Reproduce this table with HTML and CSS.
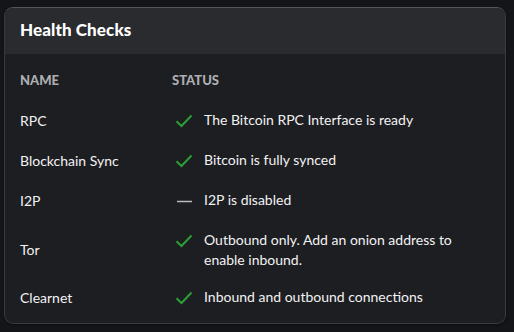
FILE: index.html
```html
<!DOCTYPE html>
<html>
<head>
<meta charset="utf-8">
<link rel="stylesheet" href="styles.css">
</head>
<body>
<section class="card">
  <header class="card-head">
    <h2 class="title">Health Checks</h2>
  </header>
  <div class="card-body">
    <table class="checks">
      <thead>
        <tr><th class="col-name">NAME</th><th class="col-status">STATUS</th></tr>
      </thead>
      <tbody>
        <tr>
          <td class="name">RPC</td>
          <td><div class="status"><svg class="icon ok" viewBox="0 0 18 24"><path d="M1.5 12.2 L6.5 17 L16.5 6.5"/></svg><span class="msg">The Bitcoin RPC Interface is ready</span></div></td>
        </tr>
        <tr>
          <td class="name">Blockchain Sync</td>
          <td><div class="status"><svg class="icon ok" viewBox="0 0 18 24"><path d="M1.5 12.2 L6.5 17 L16.5 6.5"/></svg><span class="msg">Bitcoin is fully synced</span></div></td>
        </tr>
        <tr>
          <td class="name">I2P</td>
          <td><div class="status"><svg class="icon dash" viewBox="0 0 18 24"><path d="M2 12.5 L17 12.5"/></svg><span class="msg">I2P is disabled</span></div></td>
        </tr>
        <tr>
          <td class="name">Tor</td>
          <td><div class="status"><svg class="icon ok" viewBox="0 0 18 24"><path d="M1.5 12.2 L6.5 17 L16.5 6.5"/></svg><span class="msg">Outbound only. Add an onion address to enable inbound.</span></div></td>
        </tr>
        <tr>
          <td class="name">Clearnet</td>
          <td><div class="status"><svg class="icon ok" viewBox="0 0 18 24"><path d="M1.5 12.2 L6.5 17 L16.5 6.5"/></svg><span class="msg">Inbound and outbound connections</span></div></td>
        </tr>
      </tbody>
    </table>
  </div>
</section>
</body>
</html>
```
FILE: styles.css
```css
html, body {
  margin: 0;
  padding: 0;
  background: #141518;
  font-family: "Lato", "Open Sans", sans-serif;
  color: #f2f2f4;
}
body {
  padding: 7px 8px 8px 4px;
}
.card {
  width: 502px;
  height: 317px;
  box-sizing: border-box;
  border-radius: 9px;
  border: 1px solid #3a3b40;
  border-top-color: #55565b;
  background: #1d1e21;
  overflow: hidden;
  box-shadow: 0 1px 2px rgba(0,0,0,0.5);
}
.card-head {
  height: 46px;
  box-sizing: border-box;
  background: #2a2b2f;
  display: flex;
  align-items: center;
  padding: 0 15px 3px;
}
.title {
  margin: 0;
  font-size: 17px;
  font-weight: 900;
  color: #ffffff;
  letter-spacing: 0.1px;
}
.card-body {
  padding: 18px 15px 0;
}
.checks {
  border-collapse: collapse;
  width: 100%;
  font-size: 14px;
}
.checks th {
  text-align: left;
  font-size: 13px;
  font-weight: 900;
  color: #adaeb3;
  padding: 0 0 13px;
  line-height: 16px;
}
.col-name { width: 152px; }
.checks td {
  padding: 8px 0;
  vertical-align: middle;
  line-height: 20px;
}
.name { color: #f2f2f4; }
.status {
  display: flex;
  align-items: flex-start;
  gap: 11px;
  width: 290px;
  color: #f2f2f4;
}
.msg {
  padding-top: 1px;
}
.icon {
  flex: none;
  width: 18px;
  height: 24px;
  margin-left: 3px;
  fill: none;
  stroke-width: 2;
  stroke-linecap: butt;
}
.icon.ok { stroke: #2c9e35; }
.icon.dash { stroke: #b9babd; stroke-width: 1.6; }
```
